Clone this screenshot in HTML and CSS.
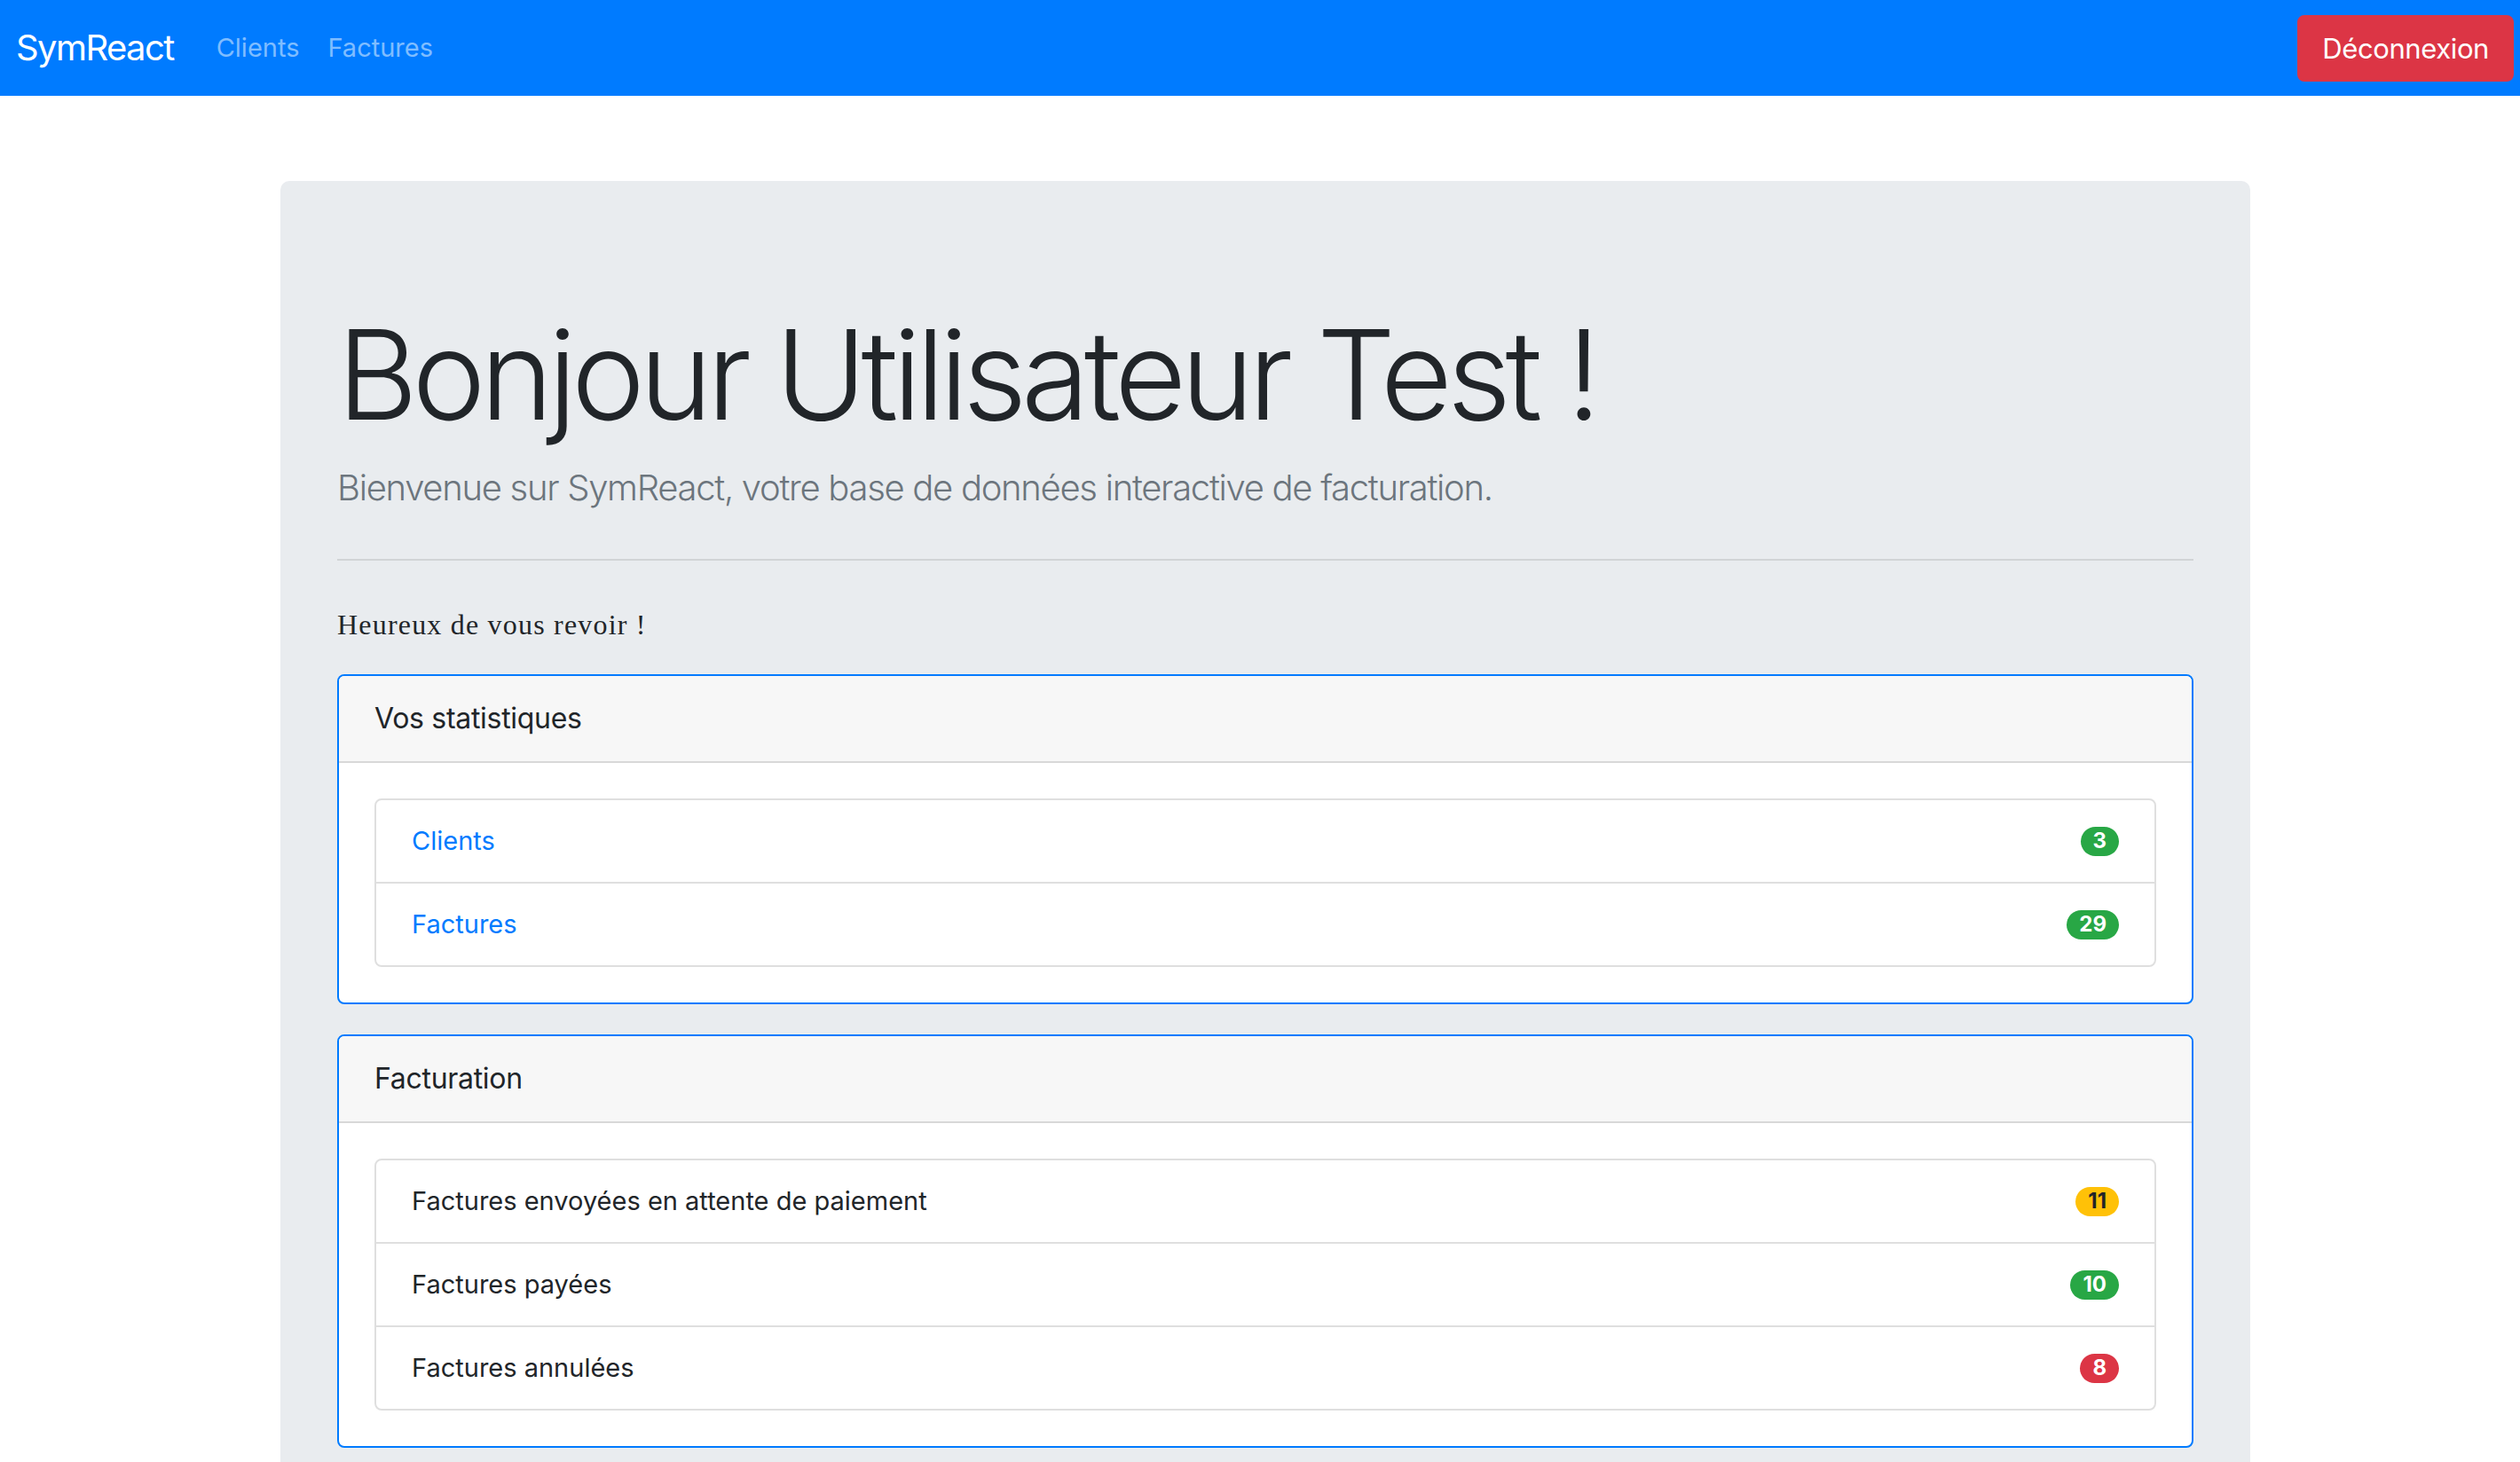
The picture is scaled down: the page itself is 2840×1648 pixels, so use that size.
FILE: index.html
```html
<!DOCTYPE html>
<html lang="fr">
<head>
<meta charset="utf-8">
<title>SymReact</title>
<link rel="stylesheet" href="styles.css">
</head>
<body>
<nav class="navbar">
  <a class="brand" href="#">SymReact</a>
  <ul class="nav">
    <li><a class="nav-link" href="#">Clients</a></li>
    <li><a class="nav-link" href="#">Factures</a></li>
  </ul>
  <button class="btn-danger" type="button">Déconnexion</button>
</nav>
<main class="container">
  <div class="jumbotron">
    <h1 class="display">Bonjour Utilisateur Test !</h1>
    <p class="lead">Bienvenue sur SymReact, votre base de données interactive de facturation.</p>
    <hr class="sep">
    <p class="welcome">Heureux de vous revoir !</p>
    <section class="card">
      <div class="card-header">Vos statistiques</div>
      <div class="card-body">
        <ul class="list-group">
          <li class="list-item"><a class="item-link" href="#">Clients</a><span class="badge success">3</span></li>
          <li class="list-item"><a class="item-link" href="#">Factures</a><span class="badge success">29</span></li>
        </ul>
      </div>
    </section>
    <section class="card">
      <div class="card-header">Facturation</div>
      <div class="card-body">
        <ul class="list-group">
          <li class="list-item"><span>Factures envoyées en attente de paiement</span><span class="badge warning">11</span></li>
          <li class="list-item"><span>Factures payées</span><span class="badge success">10</span></li>
          <li class="list-item"><span>Factures annulées</span><span class="badge danger">8</span></li>
        </ul>
      </div>
    </section>
  </div>
</main>
</body>
</html>
```
FILE: styles.css
```css
* { box-sizing: border-box; }
html, body { margin: 0; padding: 0; }
body {
  font-family: Inter, "Noto Sans", "Liberation Sans", sans-serif;
  color: #212529;
  background: #fff;
  font-size: 32px;
  line-height: 1.5;
}
a { text-decoration: none; }

.navbar {
  display: flex;
  align-items: center;
  height: 108px;
  background: #007bff;
  padding: 0 7px 0 18px;
}
.brand {
  color: #fff;
  font-size: 40px;
  line-height: 60px;
  margin-right: 32px;
  letter-spacing: -1.6px;
}
.nav {
  display: flex;
  list-style: none;
  margin: 0;
  padding: 0;
}
.nav-link {
  display: block;
  color: rgba(255,255,255,.5);
  font-size: 29px;
  line-height: 48px;
  padding: 0 16px;
  letter-spacing: 0;
}
.btn-danger {
  margin-left: auto;
  background: #dc3545;
  border: 2px solid #dc3545;
  color: #fff;
  font-family: inherit;
  font-size: 31px;
  line-height: 47px;
  padding: 12px 26px;
  border-radius: 8px;
  letter-spacing: -0.4px;
}

.container {
  width: 2220px;
  margin: 96px 0 0 316px;
}
.jumbotron {
  background: #e9ecef;
  border-radius: 10px;
  padding: 128px 64px;
}
.display {
  font-size: 140px;
  font-weight: 300;
  line-height: 1.2;
  margin: 6px 0 14px;
  letter-spacing: -6.3px;
}
.lead {
  font-size: 40px;
  font-weight: 300;
  line-height: 1.5;
  color: #6c757d;
  margin: 0 0 32px;
  letter-spacing: -1.3px;
}
.sep {
  border: 0;
  border-top: 2px solid rgba(0,0,0,.1);
  margin: 50px 0 48px;
}
.welcome {
  font-family: "Liberation Serif", "DejaVu Serif", serif;
  font-size: 32px;
  line-height: 48px;
  margin: 0 0 32px;
  letter-spacing: 1.2px;
}
.card {
  background: #fff;
  border: 2px solid #007bff;
  border-radius: 8px;
  margin-bottom: 34px;
  overflow: hidden;
}
.card-header {
  background: #f7f7f7;
  border-bottom: 2px solid rgba(0,0,0,.125);
  padding: 24px 40px;
  line-height: 48px;
  letter-spacing: -0.3px;
}
.card-body { padding: 40px; }
.list-group {
  list-style: none;
  margin: 0;
  padding: 0;
  border: 2px solid rgba(0,0,0,.125);
  border-radius: 8px;
}
.list-item {
  display: flex;
  justify-content: space-between;
  align-items: center;
  padding: 24px 40px;
  font-size: 29px;
  line-height: 44px;
  letter-spacing: 0;
}
.list-item + .list-item { border-top: 2px solid rgba(0,0,0,.125); }
.item-link { color: #007bff; }
.badge {
  display: inline-block;
  font-size: 24px;
  font-weight: 700;
  line-height: 1;
  padding: 4px 14px 5px;
  border-radius: 200px;
  color: #fff;
  letter-spacing: 0;
}
.success { background: #28a745; }
.warning { background: #ffc107; color: #212529; }
.danger { background: #dc3545; }
```
